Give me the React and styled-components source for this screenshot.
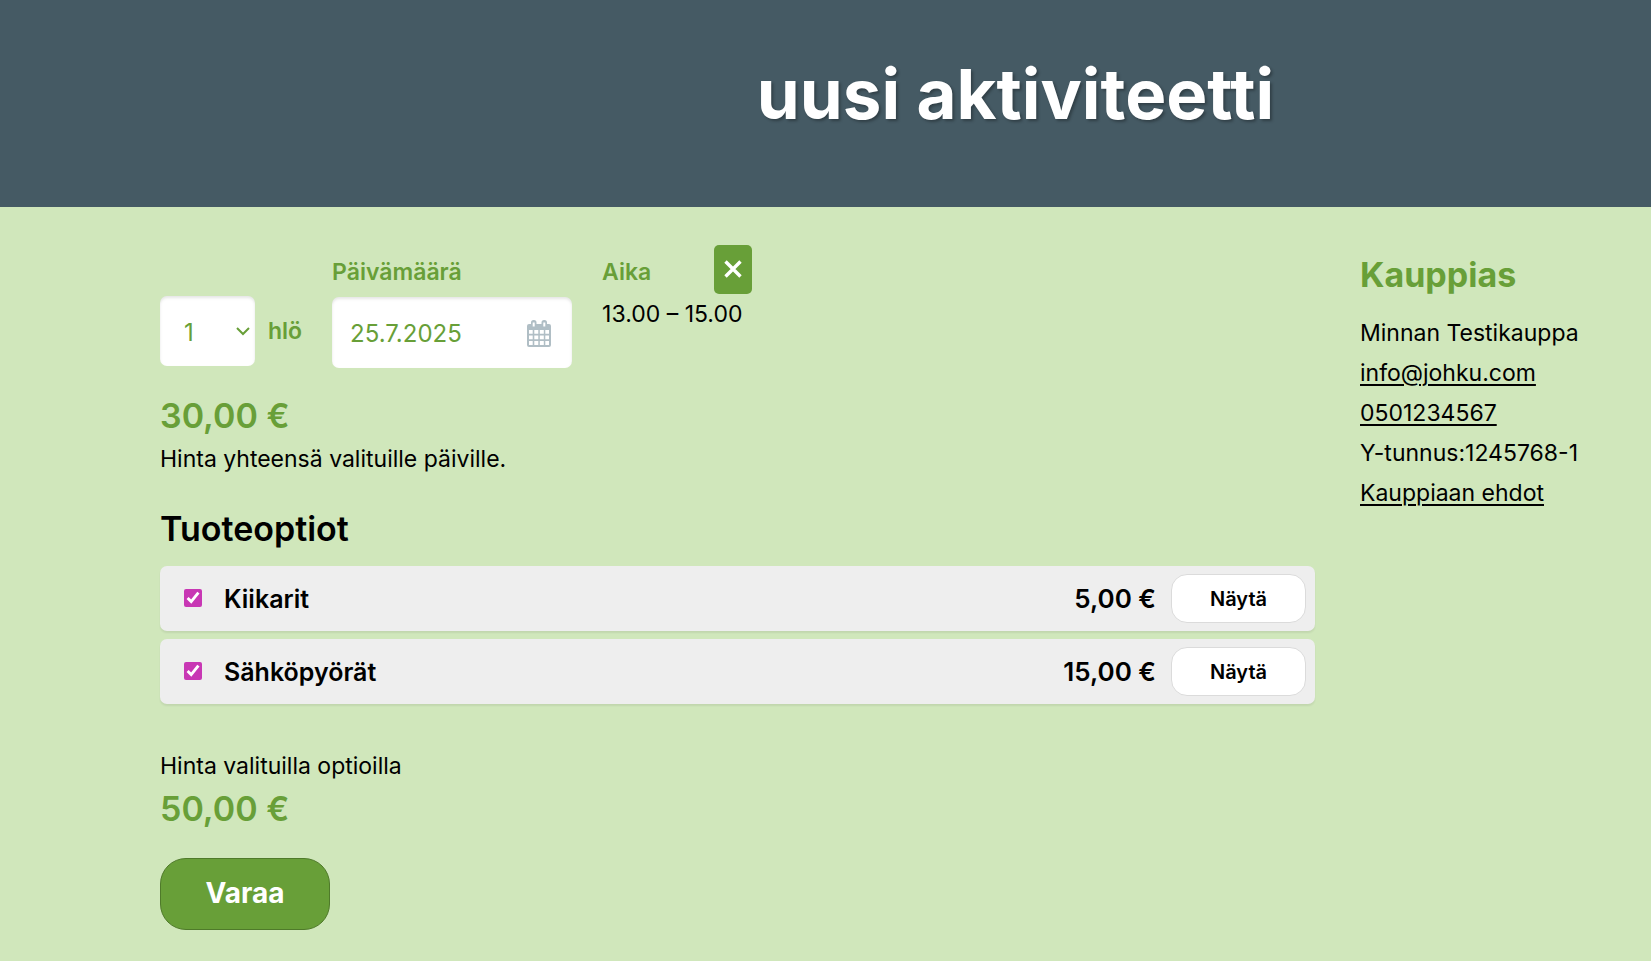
import React from "react";
import styled, { createGlobalStyle } from "styled-components";

const green = "#689f38";

const GlobalStyle = createGlobalStyle`
  *, *::before, *::after { box-sizing: border-box; }
  body {
    margin: 0;
    min-height: 100vh;
    background: #d0e7bb;
    color: #000;
    font: 400 23px/30px Inter, "Liberation Sans", sans-serif;
  }
  button, input, select { font-family: inherit; }
`;

const Hero = styled.header`
  padding: 44px 0 63px 380px;
  background: #455a64;
`;

const HeroTitle = styled.h1`
  margin: 0;
  color: #fff;
  font-size: 69px;
  font-weight: 700;
  line-height: 100px;
  text-align: center;
  text-shadow: 2px 2px 3px rgba(0, 0, 0, 0.3);
`;

const Page = styled.div`
  display: flex;
  align-items: flex-start;
  gap: 45px;
  padding: 38px 0 32px 160px;
`;

const Main = styled.main`
  flex: 1;
  min-width: 0;
`;

const Sidebar = styled.aside`
  flex: none;
  width: 291px;
  padding: 7px 20px 0 0;
`;

const SideTitle = styled.h2`
  margin: 0 0 20px;
  color: ${green};
  font-size: 34px;
  font-weight: 700;
  line-height: 46px;
`;

const SideList = styled.ul`
  display: grid;
  gap: 10px;
  margin: 0;
  padding: 0;
  list-style: none;
  white-space: nowrap;
`;

const SideLink = styled.a`
  color: inherit;
  text-decoration-thickness: 2px;
  text-underline-offset: 3px;
`;

const Filters = styled.form`
  display: flex;
  align-items: flex-start;
  gap: 30px;
`;

const FieldLabel = styled.label`
  color: ${green};
  font-size: 23px;
  font-weight: 600;
  line-height: 30px;
`;

const Persons = styled.div`
  display: flex;
  align-items: center;
  gap: 13px;
  margin-top: 51px;
`;

const SelectBox = styled.div`
  position: relative;
  width: 95px;
  height: 70px;

  svg {
    position: absolute;
    top: 31px;
    right: 5px;
    pointer-events: none;
  }
`;

const Select = styled.select`
  width: 100%;
  height: 100%;
  padding: 2px 24px 0;
  border: 0;
  border-radius: 7px;
  background: #fff;
  box-shadow: inset 0 2px 3px rgba(10, 10, 10, 0.1);
  color: ${green};
  font-size: 24px;
  appearance: none;
`;

const DateField = styled.div`
  display: grid;
  gap: 10px;
  padding-top: 12px;
`;

const DateBox = styled.div`
  display: flex;
  align-items: center;
  width: 240px;
  height: 71px;
  padding: 2px 21px 0 18px;
  border-radius: 7px;
  background: #fff;
  box-shadow: inset 0 2px 3px rgba(10, 10, 10, 0.1);
`;

const DateInput = styled.input`
  flex: 1;
  min-width: 0;
  padding: 0;
  border: 0;
  background: none;
  color: ${green};
  font-size: 24px;
`;

const TimeField = styled.div`
  width: 150px;
`;

const TimeHead = styled.div`
  display: flex;
  justify-content: space-between;
  align-items: flex-start;

  span {
    padding-top: 12px;
  }
`;

const CloseButton = styled.button`
  display: grid;
  place-items: center;
  width: 38px;
  height: 49px;
  padding: 0 0 2px;
  border: 0;
  border-radius: 5px;
  background: ${green};
`;

const TimeValue = styled.div`
  margin-top: 5px;
  white-space: nowrap;
`;

const Price = styled.p`
  margin: 0;
  color: ${green};
  font-size: 34px;
  font-weight: 600;
  line-height: 56px;
`;

const Note = styled.p`
  margin: 0;
`;

const SectionTitle = styled.h2`
  margin: 0 0 14px;
  font-size: 34px;
  font-weight: 600;
  line-height: 46px;
`;

const PriceBlock = styled.section`
  margin: 20px 0 32px;
`;

const Options = styled.div`
  display: grid;
  gap: 8px;
  margin-bottom: 47px;
`;

const Option = styled.div`
  display: flex;
  align-items: center;
  height: 65px;
  padding: 0 9px 0 24px;
  border-radius: 7px;
  background: #eee;
  box-shadow: 0 2px 2px rgba(0, 0, 0, 0.07);
  font-size: 26px;
  font-weight: 600;
`;

const Check = styled.input`
  width: 18px;
  height: 18px;
  margin: 0 22px 2px 0;
  accent-color: #c837b4;
`;

const OptionName = styled.label`
  flex: 1;
  font-size: 25px;
`;

const ShowButton = styled.button`
  width: 135px;
  height: 49px;
  margin-left: 15px;
  padding: 0;
  border: 1px solid #dbdbdb;
  border-radius: 16px;
  background: #fff;
  color: #000;
  font-size: 20px;
  font-weight: 600;
`;

const BookButton = styled.button`
  width: 170px;
  height: 72px;
  margin-top: 21px;
  padding: 0 0 2px;
  border: 1px solid #4f7a2a;
  border-radius: 26px;
  background: ${green};
  color: #fff;
  font-size: 28px;
  font-weight: 700;
`;

const Chevron = () => (
  <svg width="14" height="9" viewBox="0 0 14 9" fill="none" aria-hidden="true">
    <path d="M1 1l6 6 6-6" stroke={green} strokeWidth="2" />
  </svg>
);

const CalendarIcon = () => (
  <svg width="24" height="27" viewBox="0 0 24 27" aria-hidden="true">
    <path
      fill="#b0bec5"
      fillRule="evenodd"
      d="M2 4h2V2.500A2.500 2.500 0 0 1 6.500 0h.5a2.500 2.500 0 0 1 2.500 2.500V4h5V2.500A2.500 2.500 0 0 1 17 0h.5A2.500 2.500 0 0 1 20 2.500V4h2a2 2 0 0 1 2 2v19a2 2 0 0 1-2 2H2a2 2 0 0 1-2-2V6a2 2 0 0 1 2-2z
      M5.700 2.500v4h2v-4zM16.300 2.500v4h2v-4z
      M2 10v3.700h3.700V10zM7.300 10v3.700h4V10zM12.800 10v3.700h4V10zM18.300 10v3.700H22V10z
      M2 15.500v3.700h3.700v-3.700zM7.300 15.500v3.700h4v-3.700zM12.800 15.500v3.700h4v-3.700zM18.300 15.500v3.700H22v-3.700z
      M2 21v4h3.700v-4zM7.300 21v4h4v-4zM12.800 21v4h4v-4zM18.300 21v4H22v-4z"
    />
  </svg>
);

const CloseIcon = () => (
  <svg width="18" height="18" viewBox="0 0 18 18" fill="none" aria-hidden="true">
    <path d="M1.500 1.500l15 15M16.500 1.500l-15 15" stroke="#fff" strokeWidth="3.400" />
  </svg>
);

const options = [
  { id: "kiikarit", name: "Kiikarit", price: "5,00 €" },
  { id: "sahkopyorat", name: "Sähköpyörät", price: "15,00 €" },
];

export default function App() {
  return (
    <>
      <GlobalStyle />
      <Hero>
        <HeroTitle>uusi aktiviteetti</HeroTitle>
      </Hero>
      <Page>
        <Main>
          <Filters>
            <Persons>
              <SelectBox>
                <Select id="persons" defaultValue="1">
                  <option>1</option>
                  <option>2</option>
                </Select>
                <Chevron />
              </SelectBox>
              <FieldLabel htmlFor="persons">hlö</FieldLabel>
            </Persons>
            <DateField>
              <FieldLabel htmlFor="date">Päivämäärä</FieldLabel>
              <DateBox>
                <DateInput id="date" type="text" defaultValue="25.7.2025" />
                <CalendarIcon />
              </DateBox>
            </DateField>
            <TimeField>
              <TimeHead>
                <FieldLabel as="span">Aika</FieldLabel>
                <CloseButton type="button" aria-label="Poista aika">
                  <CloseIcon />
                </CloseButton>
              </TimeHead>
              <TimeValue>13.00 – 15.00</TimeValue>
            </TimeField>
          </Filters>
          <PriceBlock>
            <Price>30,00 €</Price>
            <Note>Hinta yhteensä valituille päiville.</Note>
          </PriceBlock>
          <SectionTitle>Tuoteoptiot</SectionTitle>
          <Options>
            {options.map((o) => (
              <Option key={o.id}>
                <Check type="checkbox" id={o.id} defaultChecked />
                <OptionName htmlFor={o.id}>{o.name}</OptionName>
                <span>{o.price}</span>
                <ShowButton type="button">Näytä</ShowButton>
              </Option>
            ))}
          </Options>
          <Note>Hinta valituilla optioilla</Note>
          <Price>50,00 €</Price>
          <BookButton type="button">Varaa</BookButton>
        </Main>
        <Sidebar>
          <SideTitle>Kauppias</SideTitle>
          <SideList>
            <li>Minnan Testikauppa</li>
            <li><SideLink href="mailto:info@johku.com">info@johku.com</SideLink></li>
            <li><SideLink href="tel:0501234567">0501234567</SideLink></li>
            <li>Y-tunnus:1245768-1</li>
            <li><SideLink href="#ehdot">Kauppiaan ehdot</SideLink></li>
          </SideList>
        </Sidebar>
      </Page>
    </>
  );
}
